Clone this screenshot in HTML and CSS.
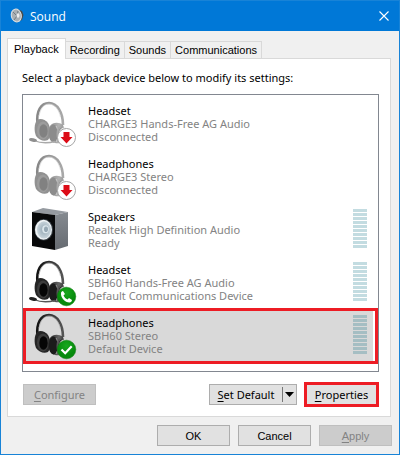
FILE: index.html
```
<!DOCTYPE html>
<html lang="en">
<head>
<meta charset="utf-8">
<title>Sound</title>
<link rel="stylesheet" href="styles.css">
</head>
<body>
<svg class="sprite" aria-hidden="true">
  <defs>
    <linearGradient id="steel" x1="0" x2="1"><stop offset="0" stop-color="#222"/><stop offset=".6" stop-color="#666"/><stop offset="1" stop-color="#222"/></linearGradient>
    <linearGradient id="band" x1="0" x2="1"><stop offset="0" stop-color="#111"/><stop offset=".5" stop-color="#333"/><stop offset="1" stop-color="#555"/></linearGradient>
    <linearGradient id="side" x1="0" y1="0" x2="0" y2="1"><stop offset="0" stop-color="#858a90"/><stop offset="1" stop-color="#666b71"/></linearGradient>
    <radialGradient id="cone"><stop offset="0" stop-color="#8fa3b0"/><stop offset="1" stop-color="#c9d5dc"/></radialGradient>
    <radialGradient id="green" cy=".3"><stop offset="0" stop-color="#18a81e"/><stop offset="1" stop-color="#078a0c"/></radialGradient>
  </defs>
  <symbol id="phones" viewBox="0 0 48 48">
    <path d="M8.500 23C7 10 12 2 20 2c8 0 14 9 14 22" fill="none" stroke="url(#band)" stroke-width="2.600"/>
    <path d="M10 15C11.500 7 15 3 20 3c6 0 10 6 11.500 13" fill="none" stroke="#aaa" stroke-width=".7"/>
    <path d="M8 19c3-2 8-1 11 3 3 5 3 13 0 17-4 2-9 0-12-4-2-5-2-12 1-16z" fill="#252525"/>
    <ellipse cx="14" cy="29.500" rx="6" ry="9" fill="#3d3d3d"/>
    <ellipse cx="14.500" cy="30" rx="4.200" ry="6.800" fill="#060606"/>
    <path d="M21 25c3-4 9-4 13-1l3 9-6 9c-5 1-10-1-11-6-1-3-1-8 1-11z" fill="url(#steel)"/>
    <ellipse cx="24.500" cy="32.500" rx="4.500" ry="9" fill="#1b1b1b"/>
    <path d="M27 25c3 5 3 11 0 16" fill="none" stroke="#999" stroke-width="1"/>
    <ellipse cx="30.500" cy="33" rx="3" ry="7.500" fill="#555"/>
    <ellipse cx="32.500" cy="33.500" rx="3" ry="7" fill="#262626"/>
    <path d="M31 29c2-3 5-3 7-2l-6 14c-3-3-3-8-1-12z" fill="#d8d8d8"/>
  </symbol>
  <symbol id="mic" viewBox="0 0 48 48">
    <path d="M5 39.500c6 2.500 13 3 21 1" fill="none" stroke="#555" stroke-width="1.300"/>
    <ellipse cx="4" cy="39" rx="4" ry="1.700" fill="#222" transform="rotate(12 4 39)"/>
  </symbol>
  <symbol id="speaker" viewBox="0 0 48 48">
    <path d="M3 5 14 1l25 4-13 3z" fill="#959aa0"/>
    <path d="M26 8 39 5v34l-13 4z" fill="url(#side)"/>
    <path d="M3 5l23 3v35L3 39z" fill="#08090a"/>
    <ellipse cx="14.800" cy="22.800" rx="9.300" ry="10.800" fill="#384047"/>
    <ellipse cx="14.500" cy="22.800" rx="8.500" ry="10" fill="#f0f4f6"/>
    <ellipse cx="15" cy="22.800" rx="7" ry="8.600" fill="url(#cone)"/>
    <ellipse cx="16.500" cy="22.300" rx="3.300" ry="4" fill="#dbe6ec"/>
    <ellipse cx="17" cy="22.300" rx="2" ry="2.800" fill="#96a8b4"/>
  </symbol>
  <symbol id="down" viewBox="0 0 48 48">
    <circle cx="37.500" cy="36.500" r="9" fill="#fff" stroke="#a6a6a6"/>
    <path d="M34.500 31h6v5h3l-6 6.500-6-6.500h3z" fill="#dc0b16"/>
  </symbol>
  <symbol id="call" viewBox="0 0 48 48">
    <circle cx="37.500" cy="36.500" r="9.300" fill="url(#green)" stroke="#08780b" stroke-width=".5"/>
    <path d="M32 33c0-1 1-2 2-2l2 3-1.500 1.500c1 2 2 3 4 4L40 38l3 2c0 1-1 2.500-2.500 2.500C36 42.500 31.500 37.500 32 33z" fill="#fff"/>
  </symbol>
  <symbol id="check" viewBox="0 0 48 48">
    <circle cx="37.500" cy="36.500" r="9.300" fill="url(#green)" stroke="#08780b" stroke-width=".5"/>
    <path d="M32.500 36.500l3.700 3.700 6.500-7" fill="none" stroke="#fff" stroke-width="2.200"/>
  </symbol>
</svg>
<main class="window">
  <header class="titlebar">
    <svg class="app-icon" viewBox="0 0 16 16" aria-hidden="true">
      <path d="M7 1l5 2 1.500 4-1.500 5-6 2.500z" fill="#4a4a48"/>
      <ellipse cx="6.300" cy="7.500" rx="5" ry="6.500" fill="#aab0b4" stroke="#dce1e4" transform="rotate(-12 6.300 7.500)"/>
      <path d="M3 4l4 4 1-5M7 8l-3 4" fill="none" stroke="#737c82"/>
      <ellipse cx="8" cy="7.500" rx="1.500" ry="2.300" fill="#eee"/>
    </svg>
    <h1>Sound</h1>
    <button class="close" aria-label="Close"><svg viewBox="0 0 10 10"><path d="M.5.500l9 9M9.500.500l-9 9" stroke="#fff" stroke-width="1.100"/></svg></button>
  </header>
  <div class="body">
    <div class="tabs" role="tablist">
      <button class="tab active" role="tab" aria-selected="true">Playback</button>
      <button class="tab" role="tab">Recording</button>
      <button class="tab" role="tab">Sounds</button>
      <button class="tab" role="tab">Communications</button>
    </div>
    <section class="panel" role="tabpanel">
      <p>Select a playback device below to modify its settings:</p>
      <ul class="devices">
        <li class="device">
          <svg class="icon"><g class="faded"><use href="#phones"/><use href="#mic"/></g><use href="#down"/></svg>
          <div class="info"><strong>Headset</strong><span>CHARGE3 Hands-Free AG Audio</span><span>Disconnected</span></div>
        </li>
        <li class="device">
          <svg class="icon"><g class="faded"><use href="#phones"/></g><use href="#down"/></svg>
          <div class="info"><strong>Headphones</strong><span>CHARGE3 Stereo</span><span>Disconnected</span></div>
        </li>
        <li class="device">
          <svg class="icon"><use href="#speaker"/></svg>
          <div class="info"><strong>Speakers</strong><span>Realtek High Definition Audio</span><span>Ready</span></div>
          <i class="meter"></i>
        </li>
        <li class="device">
          <svg class="icon"><use href="#phones"/><use href="#mic"/><use href="#call"/></svg>
          <div class="info"><strong>Headset</strong><span>SBH60 Hands-Free AG Audio</span><span>Default Communications Device</span></div>
          <i class="meter"></i>
        </li>
        <li class="device selected">
          <svg class="icon"><use href="#phones"/><use href="#check"/></svg>
          <div class="info"><strong>Headphones</strong><span>SBH60 Stereo</span><span>Default Device</span></div>
          <i class="meter"></i>
        </li>
      </ul>
      <div class="actions">
        <button class="btn wide" disabled><u>C</u>onfigure</button>
        <div class="split">
          <button class="split-main"><u>S</u>et Default</button>
          <button class="split-arrow" aria-label="More default options"><svg viewBox="0 0 9 5"><path d="M0 0h9L4.500 5z"/></svg></button>
        </div>
        <button class="btn wide marked"><u>P</u>roperties</button>
      </div>
    </section>
    <footer class="footer">
      <button class="btn">OK</button>
      <button class="btn">Cancel</button>
      <button class="btn" disabled><u>A</u>pply</button>
    </footer>
  </div>
</main>
</body>
</html>
```
FILE: styles.css
```
* { box-sizing: border-box; }
body { margin: 0; font-family: "Noto Sans", "Open Sans", sans-serif; font-size: 11px; color: #000; }
button { font: inherit; color: inherit; padding: 0; margin: 0; border: 0; background: none; white-space: nowrap; }
.sprite { position: absolute; width: 0; height: 0; }
.window { min-height: 100vh; border: 1px solid #1883d7; background: #f0f0f0; }
.titlebar { display: flex; align-items: center; height: 30px; padding: 0 10px 0 9px; background: #0078d7; color: #fff; }
.app-icon { width: 16px; height: 16px; }
h1 { flex: 1; margin: 0 0 0 4px; font-family: "Open Sans", sans-serif; font-size: 12px; font-weight: 400; }
.close { display: flex; padding: 0; }
.close svg { width: 10px; height: 10px; }
.body { padding: 7px 7px 8px 6px; }
.tabs { display: flex; align-items: flex-end; height: 20px; font-family: "Liberation Sans", sans-serif; }
.tab { height: 17px; padding: 0 4px; border: 1px solid #d9d9d9; border-width: 1px 1px 0 0; line-height: 17px; }
.tab.active { align-self: flex-start; z-index: 1; height: 21px; margin-bottom: -1px; padding: 0 6px; border-left-width: 1px; background: #fff; }
.panel { margin-right: 1px; padding: 11px 11px 9px 14px; border: 1px solid #d9d9d9; background: #fff; }
.panel p { margin: 0 0 8px; line-height: 16px; }
.devices { list-style: none; margin: 0; padding: 4px 0 10px; border: 1px solid #828790; display: grid; gap: 3px; }
.device { display: flex; height: 50px; padding: 2px 11px 0 6px; }
.icon { width: 48px; height: 48px; flex: none; }
.faded { opacity: .5; }
.info { flex: 1; padding: 3px 0 0 11px; display: flex; flex-direction: column; line-height: 13px; color: #838383; }
.info strong { font-weight: 400; color: #000; }
.meter { width: 14px; height: 39px; margin-top: 2px; background: repeating-linear-gradient(#c3dce1 0 3px, transparent 3px 4px); }
.selected { background: #d9d9d9; outline: 3px solid #ed1c24; box-shadow: inset -2px 0 #fff; margin: 0 3px; padding: 2px 8px 0 3px; }
.selected .meter { background: repeating-linear-gradient(#a5bec3 0 3px, transparent 3px 4px); }
.actions { display: flex; align-items: center; margin-top: 10px; padding-left: 1px; }
.btn { width: 73px; height: 21px; border: 1px solid #adadad; background: #e1e1e1; font-family: "Liberation Sans", sans-serif; }
.wide { font-family: inherit; }
.btn:disabled { background: #ccc; border-color: #bfbfbf; color: #838383; }
u { text-underline-offset: 2px; }
.split { display: flex; align-items: center; width: 88px; height: 21px; margin: 0 7px 0 auto; border: 1px solid #adadad; background: #e1e1e1; }
.split-main { flex: 1; }
.split-arrow { display: flex; align-items: center; height: 15px; padding: 0 2px; border-left: 1px solid #777; }
.split-arrow svg { width: 9px; height: 5px; }
.marked { width: 75px; height: 25px; border: 3px solid #ed1c24; }
.footer { display: flex; justify-content: flex-end; gap: 8px; padding-top: 8px; }
```
